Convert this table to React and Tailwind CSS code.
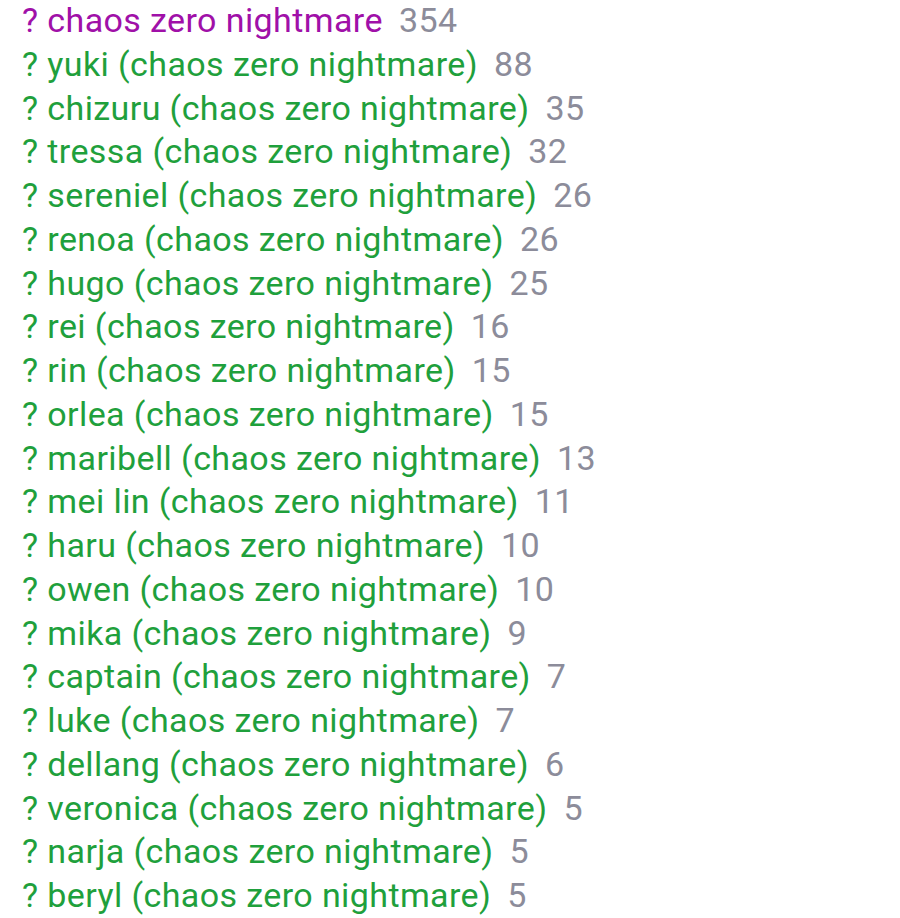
const tags = [
  ['chaos zero nightmare', 354, 'copyright'],
  ['yuki (chaos zero nightmare)', 88],
  ['chizuru (chaos zero nightmare)', 35],
  ['tressa (chaos zero nightmare)', 32],
  ['sereniel (chaos zero nightmare)', 26],
  ['renoa (chaos zero nightmare)', 26],
  ['hugo (chaos zero nightmare)', 25],
  ['rei (chaos zero nightmare)', 16],
  ['rin (chaos zero nightmare)', 15],
  ['orlea (chaos zero nightmare)', 15],
  ['maribell (chaos zero nightmare)', 13],
  ['mei lin (chaos zero nightmare)', 11],
  ['haru (chaos zero nightmare)', 10],
  ['owen (chaos zero nightmare)', 10],
  ['mika (chaos zero nightmare)', 9],
  ['captain (chaos zero nightmare)', 7],
  ['luke (chaos zero nightmare)', 7],
  ['dellang (chaos zero nightmare)', 6],
  ['veronica (chaos zero nightmare)', 5],
  ['narja (chaos zero nightmare)', 5],
  ['beryl (chaos zero nightmare)', 5],
];

export default function App() {
  return (
    <div className="w-[900px] h-[918px] bg-white overflow-hidden pl-[22px]" style={{ fontFamily: 'Roboto, sans-serif' }}>
      <ul>
        {tags.map(([name, count, type]) => (
          <li key={name} className="h-[43.75px] leading-[40px] text-[34px] tracking-[0.4px] whitespace-nowrap">
            <span className={type === 'copyright' ? 'text-[#a010a8]' : 'text-[#1fa03c]'}>? {name}</span>
            <span className="ml-[16px] text-[#8c8c9a]">{count}</span>
          </li>
        ))}
      </ul>
    </div>
  );
}
